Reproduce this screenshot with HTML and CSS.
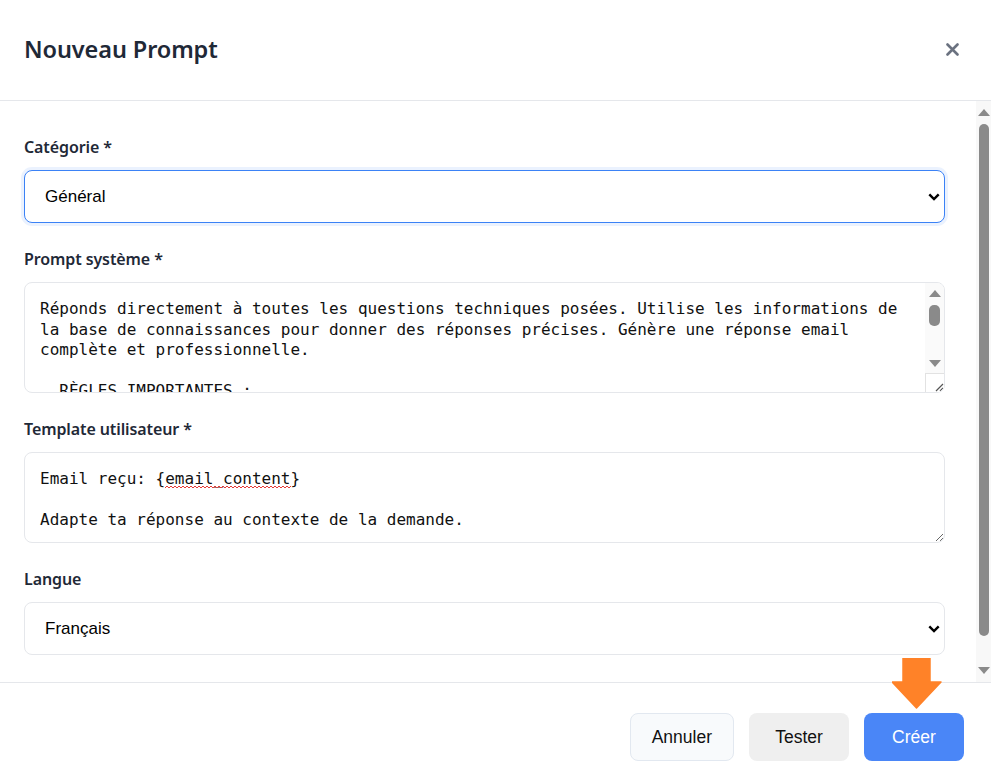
FILE: index.html
```html
<!DOCTYPE html>
<html lang="fr">
<head>
<meta charset="utf-8">
<title>Nouveau Prompt</title>
<link rel="stylesheet" href="styles.css">
</head>
<body>
<div class="modal">
  <header class="modal-header">
    <h2 class="modal-title">Nouveau Prompt</h2>
    <button class="close-btn" aria-label="Fermer">
      <svg width="13" height="13" viewBox="0 0 13 13"><path d="M1.5 1.5 L11.5 11.5 M11.5 1.5 L1.5 11.5" stroke="#6b7280" stroke-width="2.6" stroke-linecap="round"/></svg>
    </button>
  </header>
  <div class="modal-body">
    <div class="body-content">
      <div class="field">
        <label class="field-label">Catégorie *</label>
        <div class="select-wrap">
          <select class="select select-focus">
            <option>Général</option>
            <option>Technique</option>
            <option>Commercial</option>
          </select>
          <svg class="chevron" width="12" height="8" viewBox="0 0 12 8"><path d="M1.3 1.3 L6 6 L10.7 1.3" fill="none" stroke="#000" stroke-width="2.4"/></svg>
        </div>
      </div>
      <div class="field">
        <label class="field-label">Prompt système *</label>
        <div class="ta-box ta-system">
          <textarea class="textarea" spellcheck="false">Réponds directement à toutes les questions techniques posées. Utilise les informations de la base de connaissances pour donner des réponses précises. Génère une réponse email complète et professionnelle.

  RÈGLES IMPORTANTES :
  - Réponds toujours en français, avec un ton courtois.
  - Ne promets jamais de délai sans confirmation.
  - Cite la documentation lorsque c'est pertinent.
  - Reste concis et structuré.
  - Termine par une formule de politesse.

  FORMAT :
  - Salutation
  - Réponse détaillée
  - Signature</textarea>
          <div class="ta-scroll">
            <div class="sb-arrow ta-up"><span class="tri tri-up"></span></div>
            <div class="sb-thumb ta-thumb"></div>
            <div class="sb-space"></div>
            <div class="sb-arrow ta-down"><span class="tri tri-down"></span></div>
            <div class="ta-corner">
              <svg width="10" height="10" viewBox="0 0 10 10"><path d="M9 2 L2 9 M9 6 L6 9" stroke="#555" stroke-width="1.2"/></svg>
            </div>
          </div>
        </div>
      </div>
      <div class="field">
        <label class="field-label">Template utilisateur *</label>
        <div class="ta-box ta-template">
          <textarea class="textarea textarea-resize" spellcheck="false">Email reçu: {email_content}

Adapte ta réponse au contexte de la demande.</textarea>
          <svg class="spell-mark" width="126" height="4" viewBox="0 0 126 4"><path d="M0 3 L2 1 L4 3 L6 1 L8 3 L10 1 L12 3 L14 1 L16 3 L18 1 L20 3 L22 1 L24 3 L26 1 L28 3 L30 1 L32 3 L34 1 L36 3 L38 1 L40 3 L42 1 L44 3 L46 1 L48 3 L50 1 L52 3 L54 1 L56 3 L58 1 L60 3 L62 1 L64 3 L66 1 L68 3 L70 1 L72 3 L74 1 L76 3 L78 1 L80 3 L82 1 L84 3 L86 1 L88 3 L90 1 L92 3 L94 1 L96 3 L98 1 L100 3 L102 1 L104 3 L106 1 L108 3 L110 1 L112 3 L114 1 L116 3 L118 1 L120 3 L122 1 L124 3 L126 1" fill="none" stroke="#e53935" stroke-width="1"/></svg>
        </div>
      </div>
      <div class="field">
        <label class="field-label">Langue</label>
        <div class="select-wrap">
          <select class="select">
            <option>Français</option>
            <option>English</option>
          </select>
          <svg class="chevron" width="12" height="8" viewBox="0 0 12 8"><path d="M1.3 1.3 L6 6 L10.7 1.3" fill="none" stroke="#000" stroke-width="2.4"/></svg>
        </div>
      </div>
    </div>
    <div class="vscroll">
      <div class="sb-arrow main-arrow"><span class="tri tri-up"></span></div>
      <div class="sb-thumb main-thumb"></div>
      <div class="sb-space"></div>
      <div class="sb-arrow main-arrow"><span class="tri tri-down"></span></div>
    </div>
  </div>
  <footer class="modal-footer">
    <button class="btn btn-cancel">Annuler</button>
    <button class="btn btn-test">Tester</button>
    <button class="btn btn-primary">Créer</button>
    <svg class="annot-arrow" width="50" height="51" viewBox="0 0 50 51"><path d="M11 0 H38 V24 H49 L24.5 50 L0 24 H11 Z" fill="#ff8228" stroke="#ff8228" stroke-width="1.5" stroke-linejoin="round"/></svg>
  </footer>
</div>
</body>
</html>
```

FILE: styles.css
```css
* { box-sizing: border-box; }
html, body { margin: 0; padding: 0; height: 100%; background: #fff; }
body { font-family: "Noto Sans", "Open Sans", sans-serif; color: #1f2937; }

.modal {
  height: 100vh;
  display: flex;
  flex-direction: column;
  position: relative;
}

.modal-header {
  flex: none;
  height: 101px;
  display: flex;
  align-items: center;
  justify-content: space-between;
  padding: 0 26px 3px 24px;
  border-bottom: 1px solid #e5e7eb;
}
.modal-title {
  margin: 0;
  font-size: 23.5px;
  font-weight: 600;
  color: #1f2937;
  letter-spacing: -0.1px;
}
.close-btn {
  width: 26px;
  height: 26px;
  padding: 0;
  border: none;
  background: transparent;
  display: flex;
  align-items: center;
  justify-content: center;
  margin-top: 1px;
}

.modal-body {
  flex: 1;
  min-height: 0;
  display: flex;
}
.body-content {
  flex: 1;
  overflow: hidden;
  padding: 34px 31px 64px 24px;
  display: flex;
  flex-direction: column;
  gap: 24px;
}

/* fake scrollbars */
.vscroll {
  flex: none;
  width: 15px;
  background: #f8f8f8;
  display: flex;
  flex-direction: column;
  align-items: center;
}
.sb-arrow {
  flex: none;
  width: 100%;
  display: flex;
  align-items: center;
  justify-content: center;
}
.main-arrow { height: 23px; }
.sb-thumb {
  flex: none;
  width: 10px;
  background: #8a8a8a;
  border-radius: 5px;
}
.main-thumb { height: 512px; }
.sb-space { flex: 1; }
.tri {
  width: 0;
  height: 0;
  border-left: 6px solid transparent;
  border-right: 6px solid transparent;
}
.tri-up { border-bottom: 7px solid #8a8a8a; }
.tri-down { border-top: 7px solid #8a8a8a; }

.field { display: flex; flex-direction: column; flex: none; }
.field-label {
  font-size: 16px;
  font-weight: 600;
  line-height: 24px;
  margin-bottom: 11px;
  color: #1f2937;
  letter-spacing: -0.1px;
}

.select-wrap { position: relative; }
.select {
  width: 100%;
  height: 53px;
  appearance: none;
  -webkit-appearance: none;
  border: 1px solid #e5e7eb;
  border-radius: 8px;
  background: #fff;
  padding: 0 40px 0 20px;
  font-family: "Liberation Sans", Arial, sans-serif;
  font-size: 17px;
  color: #000;
  outline: none;
}
.select-focus {
  border-color: #3b82f6;
  box-shadow: 0 0 0 3px rgba(59, 130, 246, 0.1);
}
.chevron {
  position: absolute;
  right: 5px;
  top: 50%;
  margin-top: -4px;
  pointer-events: none;
}

.ta-box {
  display: flex;
  border: 1px solid #e5e7eb;
  border-radius: 8px;
  overflow: hidden;
  background: #fff;
  position: relative;
}
.ta-system { height: 111px; }
.ta-template { height: 91px; }
.textarea {
  flex: 1;
  min-width: 0;
  border: none;
  padding: 16px 15px 12px;
  font-family: "DejaVu Sans Mono", "Liberation Mono", monospace;
  font-size: 16px;
  line-height: 20.5px;
  color: #111;
  background: transparent;
  outline: none;
  resize: none;
  overflow: hidden;
}
.textarea-resize { resize: vertical; }

.spell-mark {
  position: absolute;
  left: 140px;
  top: 32px;
  pointer-events: none;
}

.ta-scroll {
  flex: none;
  width: 19px;
  background: #fafafa;
  display: flex;
  flex-direction: column;
  align-items: center;
}
.ta-up { height: 21px; }
.ta-thumb { height: 21px; margin-top: 1px; width: 11px; }
.ta-down { height: 20px; }
.ta-corner {
  flex: none;
  width: 100%;
  height: 19px;
  border-top: 1px solid #e2e2e2;
  border-left: 1px solid #e2e2e2;
  background: #fff;
  display: flex;
  align-items: flex-end;
  justify-content: flex-end;
}

.modal-footer {
  flex: none;
  height: 91px;
  border-top: 1px solid #e5e7eb;
  display: flex;
  justify-content: flex-end;
  align-items: flex-start;
  gap: 15px;
  padding: 30px 27px 0 24px;
  position: relative;
}
.btn {
  height: 48px;
  min-width: 100px;
  padding: 0 21px;
  border-radius: 8px;
  font-family: "Liberation Sans", Arial, sans-serif;
  font-size: 17.5px;
  color: #111;
  border: 1px solid transparent;
}
.btn-cancel { background: #f8fafc; border-color: #e2e8f0; min-width: 103px; }
.btn-test { background: #efefef; }
.btn-primary { background: #4a86f7; color: #fff; }

.annot-arrow {
  position: absolute;
  left: 892px;
  top: -25px;
}
```
